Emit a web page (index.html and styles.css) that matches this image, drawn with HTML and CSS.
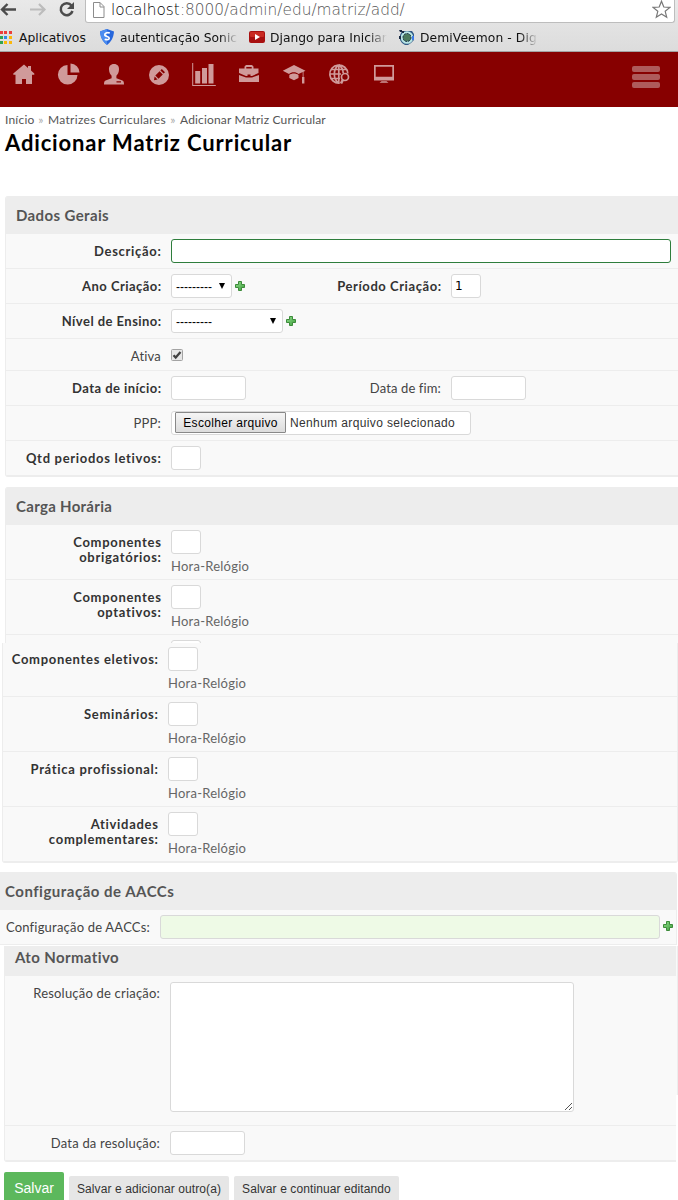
FILE: index.html
```html
<!DOCTYPE html>
<html lang="pt-BR">
<head>
<meta charset="utf-8">
<title>Adicionar Matriz Curricular</title>
<link rel="stylesheet" href="styles.css">
</head>
<body>
<svg class="defs" width="0" height="0">
  <linearGradient id="leaf" x1="0" y1="0" x2="1" y2="1"><stop offset="0" stop-color="#8fdc8c"/><stop offset="1" stop-color="#3f9f3c"/></linearGradient>
  <symbol id="plus" viewBox="0 0 10 10"><path d="M3.5.5h3v3h3v3h-3v3h-3v-3h-3v-3h3z" fill="url(#leaf)" stroke="#3d8b3a"/></symbol>
</svg>
<header class="browser">
  <div class="toolbar">
    <svg class="controls" viewBox="0 0 85 23" width="85" height="23">
      <path d="M16 9.500H3M7.500 4 2 9.500 7.500 15" fill="none" stroke="#4c4c4c" stroke-width="2.400"/>
      <path d="M30 9.500h13M39 4l5.500 5.500L39 15" fill="none" stroke="#bcbcbc" stroke-width="2.200"/>
      <path d="M71.500 5.500A6 6 0 1 0 72.500 11" fill="none" stroke="#4c4c4c" stroke-width="2.500"/>
      <path d="M74 2v7h-7z" fill="#4c4c4c"/>
    </svg>
    <div class="address">
      <svg width="12" height="16" viewBox="0 0 12 16"><path d="M.5.5h6.500l4 4v11H.5zM7 .5v4.500h4" fill="#fff" stroke="#8c8c8c"/></svg>
      <span class="url"><b>localhost</b>:8000/admin/edu/matriz/add/</span>
      <svg class="star" width="19" height="19" viewBox="0 0 19 19"><path d="M9.500 1.200l2.300 5.800 6.100.4-4.700 3.900 1.500 6-5.200-3.300-5.200 3.300 1.500-6L1.100 7.400l6.100-.4z" fill="#fff" stroke="#777" stroke-width="1.200"/></svg>
    </div>
  </div>
  <div class="bookmarks">
    <svg class="apps" width="12" height="13" viewBox="0 0 12 13"><path d="M0 0h3v3H0zM4 0h3v3H4zM9 0h3v3H9z" fill="#ec3e3a"/><path d="M0 5h3v3H0z" fill="#32a350"/><path d="M4 5h3v3H4z" fill="#2f8be6"/><path d="M9 5h3v3H9zM4 10h3v3H4zM9 10h3v3H9z" fill="#fbb70a"/><path d="M0 10h3v3H0z" fill="#32a350"/></svg>
    <span class="bm bm-apps">Aplicativos</span>
    <svg class="shield" width="14" height="16" viewBox="0 0 14 16"><path d="M0 2.500 7 0l7 2.500C13.500 9 11 13 7 16 3 13 .5 9 0 2.500z" fill="#2767dc"/><path d="M0 2.500 7 0v16C3 13 .5 9 0 2.500z" fill="#4b8cf0"/><path d="M9.800 4C7 3 4.500 4.200 4.800 6c.3 1.700 4.500 1.300 4.400 3.200-.1 1.600-2.500 1.800-4.500 1" fill="none" stroke="#fff" stroke-width="1.700"/></svg>
    <span class="bm fade bm-auth">autenticação Sonic</span>
    <svg class="video" width="16" height="12" viewBox="0 0 16 12"><rect width="16" height="12" rx="2" fill="#a81010"/><rect x="1" y="1" width="14" height="5" rx="1" fill="#c92a22"/><path d="M6 3l5 3-5 3z" fill="#fff"/></svg>
    <span class="bm fade bm-django">Django para Iniciar</span>
    <svg class="gadget" width="16" height="15" viewBox="0 0 16 15"><path d="M3 1h10l2 3v6l-3 3-3 2H6l-3-2-2-3V5z" fill="#335b86"/><circle cx="8" cy="7.500" r="5.200" fill="#4b7a5d" stroke="#b9e6e6" stroke-width="2.200"/><circle cx="8" cy="7.500" r="4" fill="none" stroke="#1e3450" stroke-dasharray="2 1"/><path d="M0 0h3v1h2v2H3V2H1zM0 6h2v3H0z" fill="#1b2b44"/><path d="M13 6h2v4h-2z" fill="#3d7be8"/></svg>
    <span class="bm fade bm-demi">DemiVeemon - Dig</span>
  </div>
</header>

<nav class="mainnav">
  <svg viewBox="0 0 24 24"><path d="M12 2.500 16 6V4h3v4.600l3.300 3v1.200H20V22h-6v-5h-4v5H3.500v-9.200H1.300v-1.200z"/></svg>
  <svg viewBox="0 0 24 24"><path d="M10.500 3v10h10A9.800 9.800 0 1 1 10.500 3zM13.500 1.500a9 9 0 0 1 9 9h-9z"/></svg>
  <svg viewBox="0 0 24 24"><path fill-rule="evenodd" d="M12 2c3.500 0 5.200 2.300 5 5.500-.1 3-1.200 4.700-2.600 6.200v2.500l6 2.300c1.200.5 1.600 1.500 1.600 4H2c0-2.500.4-3.500 1.600-4l6-2.300v-2.500C8.200 12.200 7.100 10.500 7 7.500 6.800 4.300 8.500 2 12 2zm2.500 17.200v1.300h4.500v-1.300z"/></svg>
  <svg viewBox="0 0 24 24"><path fill-rule="evenodd" d="M12 3a10 10 0 1 1 0 20 10 10 0 0 1 0-20zM14.800 7l3.200 3.200-1.400 1.400-3.200-3.200zM12.600 9.200l3.200 3.200-4.300 4.300-3.200-3.200zM7.600 14.400l3 3L7 18.200z"/></svg>
  <svg viewBox="0 0 24 24"><path d="M.2 1h1v22h22.600v1H.2zM3.200 9h5v12.500h-5zM10 6h5v15.500h-5zM16.500 2h5v19.500h-5z"/></svg>
  <svg viewBox="0 0 24 24"><path fill-rule="evenodd" d="M7.500 6.500V4.500L9 3h6l1.500 1.500v2H21.500V11L15 14h-1.500v-1.500h-3V14H9l-7-3V6.500zm1.800 0h5.400V5H9.300zM2 13l7 2.500h6l7-2.500v7H2z"/></svg>
  <svg viewBox="0 0 24 24"><path d="M12 3l11.500 5.800-2 1V15h.9v6.500H20V15h.7v-5l-4.200 2C14 9.500 9.500 9.500 7 12L.8 8.800zM7.300 13c2.500-2 6.700-2 9.200 0v3L12 18.300 7.300 16z"/></svg>
  <svg viewBox="0 0 24 24"><g fill="none" stroke="#d09a9a" stroke-width="1.700"><path d="M20.800 11.500a9 9 0 1 0-8 9.500M11.800 3c-6 4-6 14 0 18M11.800 3c3 2 4.300 5 4.400 8M11.800 3v18M3 12h11M4.500 7.500H19M4.500 16.500H13"/><circle cx="18" cy="15" r="3.500"/><path d="M16 17.500l-2 4" stroke-width="2.600"/></g></svg>
  <svg viewBox="0 0 24 24"><path fill-rule="evenodd" d="M2 3h20v15.500H2zm1.700 1.700v10h16.600v-10zM9.500 19.200h5l2 1.600h-9z"/></svg>
  <div class="burger"><i></i><i></i><i></i></div>
</nav>

<div class="heading">
  <p class="crumbs"><span class="c1">Início</span><em>»</em><span class="c2">Matrizes Curriculares</span><em>»</em><span class="c3">Adicionar Matriz Curricular</span></p>
  <h1>Adicionar Matriz Curricular</h1>
</div>

<section class="panel">
  <h2>Dados Gerais</h2>
  <div class="row"><label class="req">Descrição:</label><div class="box long focus"></div></div>
  <div class="row"><label class="req snug">Ano Criação:</label><div class="box select year"><span>---------</span><b></b></div><svg class="add"><use href="#plus"/></svg><label class="req second">Período Criação:</label><div class="box tiny">1</div></div>
  <div class="row"><label class="req snug">Nível de Ensino:</label><div class="box select level"><span>---------</span><b></b></div><svg class="add"><use href="#plus"/></svg></div>
  <div class="row short"><label>Ativa</label><svg class="check" width="12" height="12" viewBox="0 0 12 12"><rect x=".5" y=".5" width="11" height="11" rx="1" fill="#e6e6e6" stroke="#a3a3a3"/><path d="M2.500 6.200 4.700 8.500 9.500 3" fill="none" stroke="#404040" stroke-width="2.200"/></svg></div>
  <div class="row"><label class="req snug">Data de início:</label><div class="box date"></div><label class="second">Data de fim:</label><div class="box date"></div></div>
  <div class="row"><label>PPP:</label><div class="box file"><span class="pick">Escolher arquivo</span><span class="none">Nenhum arquivo selecionado</span></div></div>
  <div class="row last"><label class="req">Qtd periodos letivos:</label><div class="box tiny"></div></div>
</section>

<section class="panel hours">
  <h2>Carga Horária</h2>
  <div class="row tall"><label class="req">Componentes<br>obrigatórios:</label><div class="field"><div class="box tiny"></div><p>Hora-Relógio</p></div></div>
  <div class="row tall"><label class="req">Componentes<br>optativos:</label><div class="field"><div class="box tiny"></div><p>Hora-Relógio</p></div></div>
  <div class="row cut"><label></label><div class="box tiny"></div></div>
</section>

<section class="panel more-hours">
  <div class="row tall first"><label class="req">Componentes eletivos:</label><div class="field"><div class="box tiny"></div><p>Hora-Relógio</p></div></div>
  <div class="row tall"><label class="req">Seminários:</label><div class="field"><div class="box tiny"></div><p>Hora-Relógio</p></div></div>
  <div class="row tall"><label class="req">Prática profissional:</label><div class="field"><div class="box tiny"></div><p>Hora-Relógio</p></div></div>
  <div class="row tall last"><label class="req">Atividades<br>complementares:</label><div class="field"><div class="box tiny"></div><p>Hora-Relógio</p></div></div>
</section>

<section class="panel aacc">
  <h2>Configuração de AACCs</h2>
  <div class="row"><label>Configuração de AACCs:</label><div class="box long green"></div><svg class="add"><use href="#plus"/></svg></div>
</section>

<div class="act">
  <section class="panel act-panel">
    <h2>Ato Normativo</h2>
    <div class="row note"><label>Resolução de criação:</label><div class="box area"><svg width="9" height="9" viewBox="0 0 9 9"><path d="M1 8 8 1M5 8l3-3" stroke="#555" fill="none"/></svg></div></div>
    <div class="row last"><label>Data da resolução:</label><div class="box date"></div></div>
  </section>
  <div class="edge"></div>
</div>

<div class="actions">
  <span class="save">Salvar</span><span class="b1">Salvar e adicionar outro(a)</span><span class="b2">Salvar e continuar editando</span>
</div>
</body>
</html>
```
FILE: styles.css
```css
* { box-sizing: border-box; }
body { margin: 0; width: 678px; height: 1200px; overflow: hidden; background: #fff; color: #444; font: 13px/15px Lato, sans-serif; letter-spacing: .2px; }
h1, h2, p { margin: 0; }
svg { display: block; flex: none; }
.defs { position: absolute; }

.browser { height: 52px; background: linear-gradient(#e9e9e9, #dcdcdc); border-bottom: 1px solid #a3a3a3; font-family: "DejaVu Sans", sans-serif; letter-spacing: 0; color: #111; }
.toolbar { display: flex; height: 23px; }
.address { display: flex; width: 590px; height: 23px; background: #fff; border: 1px solid #bdbdbd; border-top: 0; border-radius: 0 0 3px 3px; padding-left: 7px; }
.address svg { margin-top: 2px; }
.url { margin-left: 6px; font: 200 15.35px/20px "DejaVu Sans Light", "DejaVu Sans", sans-serif; color: #555; white-space: nowrap; }
.url b { font-weight: 200; color: #000; }
.address .star { margin: 0 3px 0 auto; }
.bookmarks { display: flex; align-items: center; height: 28px; font-size: 12.3px; white-space: nowrap; }
.bm { flex: none; line-height: 18px; padding-top: 1px; }
.bm-apps { margin-left: 7px; width: 75px; }
.shield { margin-left: 6px; }
.bm-auth { margin-left: 6px; width: 118px; }
.video { margin-left: 11px; }
.bm-django { margin-left: 5px; width: 117px; }
.gadget { margin-left: 12px; }
.bm-demi { margin-left: 5px; width: 118px; letter-spacing: .1px; }
.fade { -webkit-mask-image: linear-gradient(90deg, #000 calc(100% - 18px), transparent); mask-image: linear-gradient(90deg, #000 calc(100% - 18px), transparent); }

.mainnav { display: flex; gap: 21px; height: 55px; padding: 10px 18px 0 12px; background: #870000; }
.mainnav svg { width: 24px; height: 24px; fill: #d09a9a; }
.burger { margin: 4px 0 0 auto; display: flex; flex-direction: column; gap: 2px; }
.burger i { width: 28px; height: 6px; border-radius: 2px; background: #ae5b5b; }

.heading { height: 89px; padding: 5px 5px 0; }
.crumbs { display: flex; font-size: 12px; color: #555; }
.crumbs em { width: 14px; text-align: center; font-style: normal; color: #aaa; }
.crumbs .c1 { width: 29px; }
.crumbs .c2 { width: 118px; letter-spacing: .31px; }
.crumbs .c3 { letter-spacing: .16px; }
h1 { color: #000; font-size: 22px; line-height: 31px; font-weight: 700; letter-spacing: .85px; }

.panel { margin-left: 5px; border-left: 1px solid #ededed; background: #f9f9f9; border-radius: 3px 0 0 3px; overflow: hidden; }
h2 { height: 38px; padding-left: 10px; background: #ededed; color: #555; font-size: 15px; line-height: 38px; font-weight: 700; letter-spacing: .38px; }
.hours h2 { letter-spacing: .3px; }
.aacc h2 { letter-spacing: .5px; }
.row { display: flex; height: 35px; padding-top: 5px; border-bottom: 1px solid #ededed; white-space: nowrap; }
.row.short { height: 32px; }
.row.last { height: 36px; border-bottom-width: 2px; }
.row.tall { height: 55px; }
.row.tall.last { height: 56px; }
label { flex: none; width: 155px; margin-right: 10px; padding-top: 5px; text-align: right; }
.req { width: 155.600px; margin-right: 9.400px; color: #333; font-weight: 700; letter-spacing: .7px; }
.snug { letter-spacing: .46px; }
.year ~ .second { width: 196.600px; letter-spacing: .56px; }
.date + .second { width: 195px; letter-spacing: .13px; }
.box { flex: none; height: 24px; border: 1px solid #d9d9d9; border-radius: 3px; background: #fff; color: #000; letter-spacing: 0; font: 12px/22px "Liberation Sans", Arial, sans-serif; }
.long { width: 500px; }
.focus { border-color: #2e7d3c; }
.green { background: #eefae6; }
.tiny { width: 30px; padding-left: 3px; font-family: "DejaVu Sans", sans-serif; }
.date { width: 75px; }
.select { display: flex; justify-content: space-between; align-items: center; padding: 0 6px 0 4px; }
.select span { padding-top: 1px; }
.select b { border: 3px solid transparent; border-width: 6px 3px 0; border-top-color: #000; }
.year { width: 61px; }
.level { width: 112px; }
.add { width: 10px; height: 10px; margin: 7px 0 0 3px; }
.aacc .add { margin-top: 6px; }
.check { margin-top: 5px; }
.file { display: flex; width: 300px; padding: 0 3px; }
.pick { width: 111px; height: 21px; border: 1px solid #888; border-radius: 1px; background: linear-gradient(#f5f5f5, #dcdcdc); text-align: center; line-height: 20px; letter-spacing: .32px; }
.none { margin-left: 4px; color: #333; letter-spacing: .37px; }
.field p { color: #666; line-height: 16px; margin-top: 4px; letter-spacing: .24px; }

.hours { margin-top: 10px; height: 156px; border-bottom-left-radius: 0; }
.row.cut { height: 8px; border-bottom: 0; overflow: hidden; }
.more-hours { margin-left: 2px; border-right: 1px solid #ededed; border-radius: 0 0 3px 3px; }
.row.tall.first { height: 54px; padding-top: 4px; }
.aacc { margin: 9px 1px 0 -6px; border-right: 1px solid #ededed; border-radius: 3px 3px 0 0; }
.act { display: flex; margin-top: 1px; height: 216px; }
.act-panel { width: 672px; margin-left: 4px; border-radius: 0 0 0 3px; }
.act h2 { height: 30px; line-height: 23px; }
.act .row.note { height: 150px; padding-top: 6px; }
.note label { padding-top: 4px; }
.area { display: flex; justify-content: flex-end; align-items: flex-end; width: 404px; height: 130px; }
.edge { width: 2px; height: 149px; background: #f9f9f9; border-right: 1px solid #ededed; }

.actions { display: flex; align-items: flex-start; gap: 5px; margin-top: 10px; padding-left: 4px; font: 12px/26px "Liberation Sans", Arial, sans-serif; letter-spacing: .1px; color: #333; white-space: nowrap; }
.actions span { height: 40px; margin-top: 4px; background: #e6e6e6; border-radius: 2px 2px 0 0; text-align: center; }
.actions .save { width: 60px; margin-top: 0; background: #5cb85c; color: #fff; font-size: 14px; line-height: 33px; letter-spacing: 0; }
.actions .b1 { width: 160px; }
.actions .b2 { width: 165px; }
```
